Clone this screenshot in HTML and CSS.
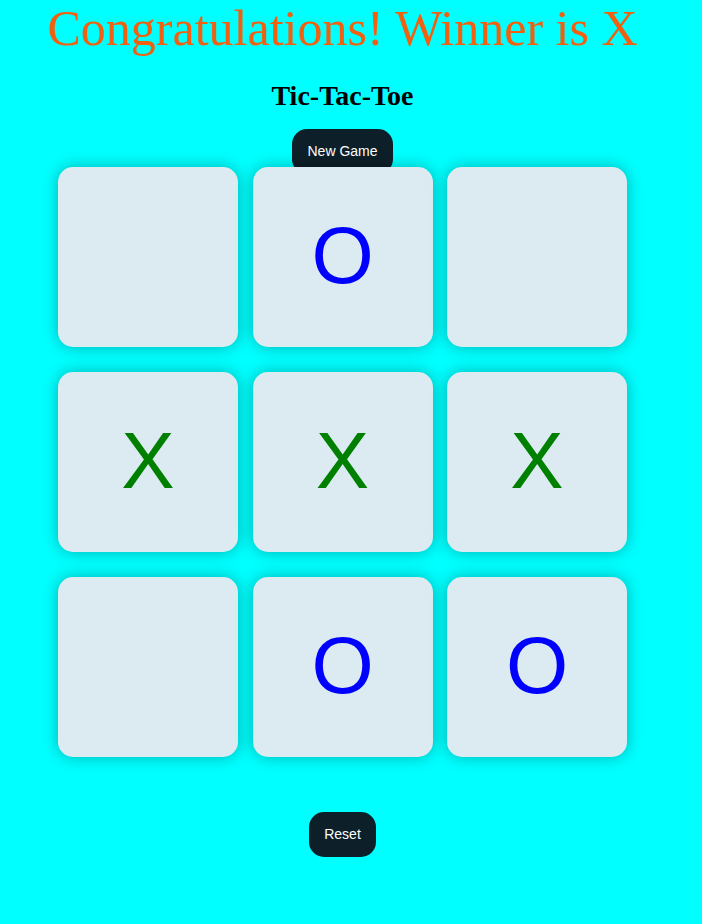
FILE: index.html
```html
<!DOCTYPE html>
<html lang="en">
<head>
<meta charset="UTF-8">
<title>Tic-Tac-Toe</title>
<link rel="stylesheet" href="styles.css">
</head>
<body>
  <div class="page">
    <div class="msg-container">
      <p class="msg">Congratulations! Winner is X</p>
    </div>
    <main class="main">
      <h1 class="heading">Tic-Tac-Toe</h1>
      <button class="btn new-btn">New Game</button>
      <div class="board">
        <button class="box"></button>
        <button class="box o">O</button>
        <button class="box"></button>
        <button class="box x">X</button>
        <button class="box x">X</button>
        <button class="box x">X</button>
        <button class="box"></button>
        <button class="box o">O</button>
        <button class="box o">O</button>
      </div>
      <button class="btn reset-btn">Reset</button>
    </main>
  </div>
</body>
</html>
```

FILE: styles.css
```css
html, body {
  margin: 0;
  padding: 0;
}

body {
  background: #00ffff;
  font-family: "Liberation Serif", "Times New Roman", serif;
  height: 924px;
  overflow: hidden;
}

.page {
  width: 685px;
  display: flex;
  flex-direction: column;
  align-items: center;
}

.msg-container {
  display: flex;
  justify-content: center;
}

.msg {
  margin: 0;
  font-size: 50px;
  line-height: 57px;
  color: #f0600f;
  white-space: nowrap;
}

.main {
  display: flex;
  flex-direction: column;
  align-items: center;
}

.heading {
  margin: 23px 0 17px;
  font-size: 28px;
  line-height: 32px;
  font-weight: bold;
  color: #000;
}

.btn {
  font-family: "Liberation Sans", Arial, sans-serif;
  font-size: 14px;
  line-height: 17px;
  padding: 14px 15px;
  color: #ffffff;
  background: #0d1f28;
  border: none;
  border-radius: 15px;
}

.board {
  margin-top: -7px;
  display: grid;
  grid-template-columns: repeat(3, 180px);
  grid-auto-rows: 180px;
  column-gap: 14.5px;
  row-gap: 25px;
}

.box {
  display: flex;
  align-items: center;
  justify-content: center;
  padding: 0 0 3px;
  border: none;
  border-radius: 15px;
  background: #dbebf1;
  box-shadow: 0 0 1rem rgba(0, 0, 0, 0.3);
  font-family: "Liberation Sans", Arial, sans-serif;
  font-size: 80px;
  line-height: 1;
}

.box.o {
  color: #0000ff;
}

.box.x {
  color: #008000;
}

.reset-btn {
  margin-top: 55px;
}
```
